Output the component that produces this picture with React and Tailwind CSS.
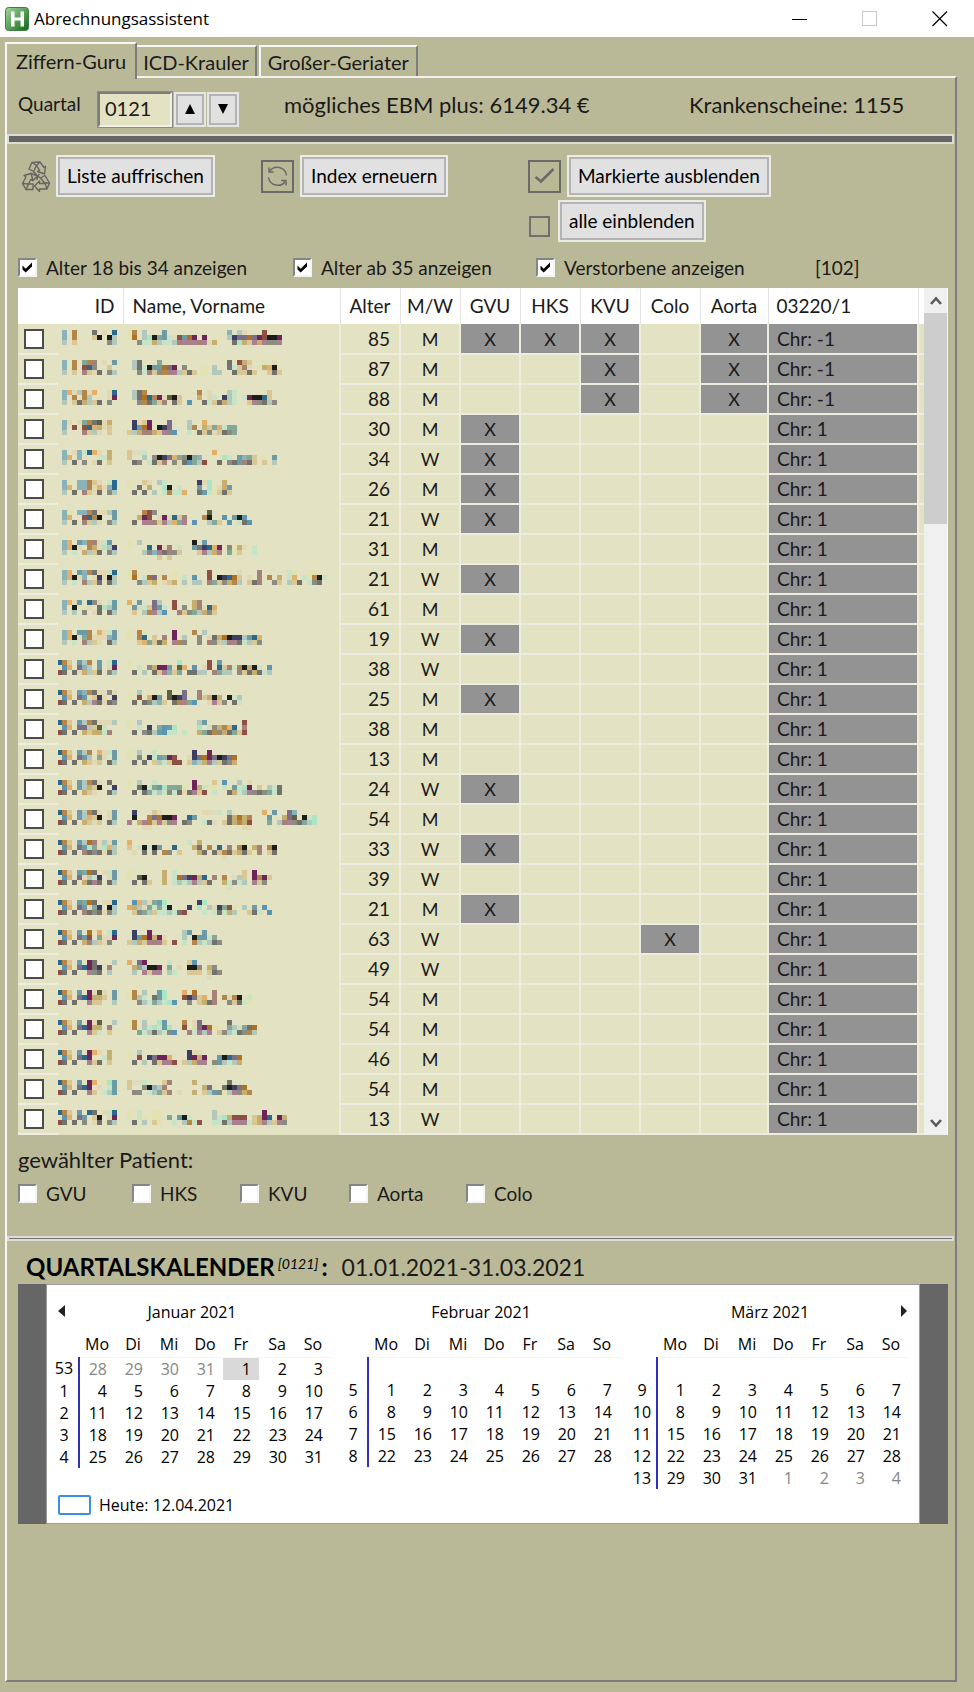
import React from "react";

const PALETTE = {
  a: "#8ab2ba", b: "#b3864a", c: "#e2d8b4", d: "#2a688e", e: "#1c1c1a", f: "#6e2458",
  g: "#72726a", h: "#b2c8bc", i: "#aae6c6", j: "#c8e4c6", k: "#c6ae70", l: "#e2b068",
  m: "#3c3e62", n: "#b07222", o: "#8e5044", p: "#7c6e88", q: "#6a9ba6", r: "#5a96b4",
  s: "#5c6240", t: "#a4827a", u: "#e2e4a6", v: "#dac796", w: "#a8808e", x: "#d8d8bc",
  y: "#84a898", z: "#8a8c82",
};

const X1 = "GVU";
const PATIENTS = [
  { age: 85, sex: "M", x: ["GVU", "HKS", "KVU", "Aorta"], chr: -1, id: [".a.b...g.c.d", ".a.b...ve.eh", ".h.v......zh"], name: ["ub.h...q............a.hc...o..", "un.hieyqjxoqnf.f....hmppnpfoeef", "..zjjkhjjhtwwwtwck...gikvwkwzzw"] },
  { age: 87, sex: "M", x: ["KVU", "Aorta"], chr: -1, id: [".a.b.ybt.c.q", ".a.b.odz..v.", ".h.v.tvcg.zh"], name: [".hg...y.............g.okv..u.c.", ".hgjeqqnpf.z...u.h..pjvtc.ukleu", "..zjtvzbtwhvgv.u.hh..gvvgv..vgv"] },
  { age: 88, sex: "M", x: ["KVU", "Aorta"], chr: -1, id: [".alchbcl..cd", ".a.b.bh...cf", ".h.vgkhvg.z."], name: [".hgb..........b.c...hj......v", ".hgndbfcsev...k.cj.mhj.jfeedv", "..zbgyvt.gv.r..gjvgkhj..vwzghz"] },
  { age: 30, sex: "M", x: [X1], chr: 1, id: [".ac.cybgsck.", ".a.o.odlkcv.", ".h...tvhc.v."], name: [".mcvf...p...h..l......", ".mqnf.emp...hb.kvyljyy", "vhkttkvwzr..j.gvzcvgzy"] },
  { age: 34, sex: "W", x: [X1], chr: 1, id: [".a.cajdlc.k.", ".al.a...jjk.", ".h.g.z.cg.v."], name: ["vxxj.............l............", "v..h.zemplyzeya....ij.qayv.u.q", ".gz.jgvt.zcgryho..g.zgqtgv.v.h", "..........x"] },
  { age: 26, sex: "M", x: [X1], chr: 1, id: [".au.aabvc.jd", ".al.aabclcad", ".h.g.tvcg.zh"], name: ["u..vc.hj......mci..k", "u.g.k..ie.j...q.i.ckq", ".g.g.h.jbjjl..gqjuvgv"] },
  { age: 21, sex: "W", x: [X1], chr: 1, id: [".au.aabgcchq", ".al..odbe..q", ".h.g.tvhc.zh"], name: ["...boz..........s....", "..kfo.cfcdvt...be..r.qer", ".g.wwtvwhlyw.r..hyv.r.jgr"] },
  { age: 31, sex: "M", x: [], chr: 1, id: [".al.qabtcjq.", ".alec.bkcihm", ".h.j.khvg.zh"], name: ["u.h..........e.q.........", "u...d.fct.j..qpmdlf.zukc.j", "...hzawgtzv...vwhkw.yuv..j", "......v.v"] },
  { age: 21, sex: "W", x: [X1], chr: 1, id: [".al.qabgccjd", ".aleca.cmceh", ".h.j.thvg.gh"], name: ["ub.......u......o.....c...t.....ju..uu..", "un.jnpub.u.j.r..o.emdnv.c.t.b.k.jl.jubej", "..zhvkucvk.h.hh.tyvzkbh.vgt..zv.hvg.jzg"] },
  { age: 61, sex: "M", x: [], chr: 1, id: [".alcq.dzc.jq", ".a.e.uc.gihq", ".h.h.z.cg.gh"], name: ["l.q..ph..o...kt", ".qcjvpqj.o.z.ktcdl", ".v.hbwhr..tvzyhkzv"] },
  { age: 19, sex: "W", x: [X1], chr: 1, id: [".al.qqb.lcjq", ".alexybcccaq", ".h.j.thvc.gh"], name: ["u.b......f...b.h......", "u.bd.v.t.f.h..z.cgknemmhqdl", "..vlyvgk.wbz..z.tzvhtwgjhvz"] },
  { age: 38, sex: "W", x: [], chr: 1, id: ["dbv.qhb.q.jd", ".rl.pah.q.cf", "og.gckhvg.zh"], name: ["u.........i.....o.q........", "u.j.zkffqcsl.r.co.dvtjbekej.r", ".g.h.gvwavy.gghh.tyhh.zvgkgjh"] },
  { age: 25, sex: "M", x: [X1], chr: 1, id: ["dbv.qabgcxzc", ".rl.pqcvmc.m", "og.g.khwgcgz"], name: ["u.h.....s..p..t........", "u.o.leq.semp..tvkek.ejh", ".g.gzhav.gbwyr..cwvz.gj"] },
  { age: 38, sex: "M", x: [], chr: 1, id: ["dbv.qhbgccch", ".rl.pphvsj..", "og.g.kvkkjt."], name: ["u.h...........hq.......o", "u.j.m.yrqi....i.czkbld.t", ".g.zghqrjj.j..kygbzkgyvo"] },
  { age: 13, sex: "M", x: [], chr: 1, id: ["dbv.qhb.lcjq", ".rl.pqh.yc.q", "og.g.kvcv.gh"], name: ["u.h..j.......m..f..", "u.z.mjqyfo..cmpnfpempn", ".g.g.vhjvoo.vahkwhvgzk"] },
  { age: 24, sex: "W", x: [X1], chr: 1, id: ["dbv.qhbgc.g.", ".rl.qhkve..m", "og.g.kvc..gh"], name: ["u.h..j.......f...v.r..h.c.", "u.gejyqiyyyu.fkjuu.juqjif.v.hjg", ".g.gyjhjzjgcgwvo.j..gkjhwzgzyjg"] },
  { age: 54, sex: "M", x: [], chr: 1, id: ["dbv.qhbgc.cq", ".rl.qhlve.cq", "og.g.kvcv.gh"], name: [".m...vc........ccxj.h......l.q..pa", ".e..bpneef..dq......gknkb...q..kps.eji", "w.kwbvwvzw.gz..jgx.vgkbko...y.htwzgyhi", "...cc..................cc"] },
  { age: 33, sex: "W", x: [X1], chr: 1, id: ["dbv.qhntchcq", ".rl.pqiycilh", "og.g.tgzgcgh"], name: ["l...........j.k........u..", "v.jejeq.ud...kg.b.d.t.beukt.be", ".c.g.g.bz.v...kg.gvbgvkgvut.vg", "...................x"] },
  { age: 39, sex: "W", x: [], chr: 1, id: ["dbv.qyng.cjq", ".rl.pchjm.cq", "og.g.kgwg.gh"], name: ["u......k.j.............v.f..", "u.se...k.jnpmfkd.t.b.xhv.fbfv", ".g.gv..k.jhjhwhvg..kjzjh.wvz", "....................x"] },
  { age: 21, sex: "M", x: [X1], chr: 1, id: ["dbv.qyng.ccd", ".rl.pqcym.eh", "og.g.tgzgczh"], name: [".rlhcyqi......mi", "lkhcyjyje...m.i.hcmyou.h.q.r", ".vzyhvjjhjgo...j.jgjkhu.vgj.r"] },
  { age: 63, sex: "W", x: ["Colo"], chr: 1, id: ["dbv.q.n.l.jd", ".rl.pqo.yccf", "og.g.kthvcz."], name: [".m..f......hq..q", ".mqnfkfc...h.eqqjy", "vhkvwtwv.o.j.bhjhgz"] },
  { age: 49, sex: "W", x: [], chr: 1, id: ["dbv.q.fg...h", ".rl.pdfgm.t.", "og.g..wzg.h."], name: ["l.pf....j...vr....", ".kyheef.y.c.eet.kz", ".h.wvww.hj..vvv.vgz", "................x"] },
  { age: 54, sex: "M", x: [], chr: 1, id: ["dbv.q.fcsc.q", ".rl.pdfkkv.q", "og.g..wvv..h"], name: ["ub.h..qi...l.n...t", "ubhj.gqi...ompvl.t.bcbeuj", "..zhjyhjir..z.vkgt..zvgju"] },
  { age: 54, sex: "M", x: [], chr: 1, id: ["dbv.q.fcs..h", ".rl.pdfkk.t.", "og.g..wvj.v."], name: ["ub.h..iq...b.cp.....g.", "ub.hjijqi..o.cpfnuu.yhjygn", "..yjhghjzr..tjwhw.vzhjgzbh"] },
  { age: 46, sex: "M", x: [], chr: 1, id: ["dbv.q.flc.k.", ".rl.pdf..jk.", "og.g..wvg.v."], name: ["u.h.........mcc", "u.o.mpffl...mfkf..qedpn", ".g.h.gvwwo.vhkww.zqhjhk", ".................x"] },
  { age: 54, sex: "M", x: [], chr: 1, id: ["dbv.q.fl.uiq", ".rl.pdf.c.jq", "og.g..wv.jhq"], name: ["vxxj...vt....k......g.", "v..zeaht.......kpu.gempn", ".zz.jhyvt.c..k.vhqzuhwzkb"] },
  { age: 13, sex: "W", x: [], chr: 1, id: ["dbv.q.dg.cjd", ".rl.pq.ve.cf", "og.g.z.cg.zh"], name: ["u.j..uu..........h.........f", "u.ju.uu.y.qej....hjikooo.vkfd.fk", ".g.h.vu..j.hbjo..jjghwwwjvkwhvwz"] },
];

const COLUMNS = ["GVU", "HKS", "KVU", "Colo", "Aorta"];

function Mosaic({ rows, cols }) {
  return (
    <svg width={cols * 5} height="20" viewBox={`0 0 ${cols * 5} 20`} shapeRendering="crispEdges" aria-hidden="true" className="block">
      {rows.flatMap((row, y) =>
        [...row].map((c, x) =>
          PALETTE[c] ? (
            <rect key={`${x}-${y}`} x={x * 5} y={y * 5} width="5" height="5" fill={PALETTE[c]} opacity={c === "u" || c === "x" ? 0.6 : 1} />
          ) : null
        )
      )}
    </svg>
  );
}

function Check({ label, checked }) {
  return (
    <label className="flex items-center gap-[9px] whitespace-nowrap">
      <span className="grid">
        <input
          type="checkbox"
          defaultChecked={checked}
          className="peer col-start-1 row-start-1 size-[19px] appearance-none border-2 border-t-[#858585] border-l-[#858585] border-r-[#f4f4f4] border-b-[#f4f4f4] bg-white"
        />
        <svg viewBox="0 0 19 19" className="pointer-events-none col-start-1 row-start-1 hidden size-[19px] peer-checked:block">
          <path d="M4.5 7.5 L7.7 10.8 L14 4.5 V8.6 L7.7 14.6 L4.5 11.5 Z" fill="#000" />
        </svg>
      </span>
      <span className="pt-[3px]">{label}</span>
    </label>
  );
}

function PushButton({ children }) {
  return (
    <button type="button" className="border-2 border-[#ebebe6] bg-[#b4b4b4] p-[2px] text-black">
      <span className="block bg-[#e1e1e1] px-[7px] py-[5px] leading-[24px] whitespace-nowrap">{children}</span>
    </button>
  );
}

function SpinButton({ label, children }) {
  return (
    <button type="button" aria-label={label} className="h-[35px] w-[32px] border-2 border-[#e6e6e2] bg-[#b4b4b4] p-[2px]">
      <span className="flex size-full items-center justify-center bg-[#e1e1e1]">
        <svg width="12" height="12" viewBox="0 0 12 12" className="fill-black">{children}</svg>
      </span>
    </button>
  );
}

function Rule({ thick }) {
  return <div className={thick ? "mr-px h-[10px] border-2 border-[#dcdcd0] bg-[#656565]" : "mr-px h-[5px] border-2 border-[#dcdcd6] bg-[#777]"} />;
}

const MONTHS = [
  { name: "Januar 2021", weeks: [[53, -28, -29, -30, -31, 1, 2, 3], [1, 4, 5, 6, 7, 8, 9, 10], [2, 11, 12, 13, 14, 15, 16, 17], [3, 18, 19, 20, 21, 22, 23, 24], [4, 25, 26, 27, 28, 29, 30, 31]] },
  { name: "Februar 2021", weeks: [[0, 0, 0, 0, 0, 0, 0, 0], [5, 1, 2, 3, 4, 5, 6, 7], [6, 8, 9, 10, 11, 12, 13, 14], [7, 15, 16, 17, 18, 19, 20, 21], [8, 22, 23, 24, 25, 26, 27, 28]] },
  { name: "März 2021", weeks: [[0, 0, 0, 0, 0, 0, 0, 0], [9, 1, 2, 3, 4, 5, 6, 7], [10, 8, 9, 10, 11, 12, 13, 14], [11, 15, 16, 17, 18, 19, 20, 21], [12, 22, 23, 24, 25, 26, 27, 28], [13, 29, 30, 31, -1, -2, -3, -4]] },
];

function Month({ month, first }) {
  return (
    <table className="w-[278px] table-fixed self-start border-collapse">
      <caption className="h-[36px] pt-[5px] text-center leading-[24px]">{month.name}</caption>
      <thead>
        <tr className="h-[26px] leading-[24px]">
          <th className="w-[26px] p-0" />
          {["Mo", "Di", "Mi", "Do", "Fr", "Sa", "So"].map((d) => (
            <th key={d} scope="col" className="border-b border-[#f4f4f4] p-0 text-center font-normal">{d}</th>
          ))}
        </tr>
      </thead>
      <tbody>
        {month.weeks.map((week, i) => (
          <tr key={i} className="h-[22px] leading-[22px]">
            {week.map((d, j) =>
              j === 0 ? (
                <th key={j} scope="row" className="border-r-2 border-[#3230b8] p-0 pr-[3px] text-center font-normal">{d || ""}</th>
              ) : (
                <td key={j} className={d < 0 ? "p-0 pr-[8px] text-right text-[#858585]" : first && i === 0 && d === 1 ? "bg-[#d9d9d9] p-0 pr-[8px] text-right" : "p-0 pr-[8px] text-right"}>
                  {d ? Math.abs(d) : ""}
                </td>
              )
            )}
          </tr>
        ))}
      </tbody>
    </table>
  );
}

export default function App() {
  return (
    <div className="flex min-h-screen flex-col bg-[#bab997] font-['Lato','Liberation_Sans',sans-serif] text-[19px] text-[#1a1a1a]">
      <header className="flex h-[37px] items-center justify-between bg-white pr-[26px] pl-[5px] font-['Open_Sans',sans-serif] text-[17px] text-black">
        <div className="flex items-center gap-[5px]">
          <svg width="24" height="24" viewBox="0 0 24 24" aria-hidden="true">
            <defs>
              <linearGradient id="logo" x1="0" y1="0" x2="1" y2="1">
                <stop offset="0" stopColor="#a4d49c" />
                <stop offset="0.5" stopColor="#5aa25a" />
                <stop offset="1" stopColor="#0c6414" />
              </linearGradient>
            </defs>
            <rect x="0.5" y="0.5" width="23" height="23" rx="3" fill="url(#logo)" stroke="#3f7f45" />
            <path d="M6 4.5h3.5v6h6v-6H19v15h-3.5v-6h-6v6H6z" fill="#fff" />
          </svg>
          <h1>Abrechnungsassistent</h1>
        </div>
        <div className="flex items-center gap-[54px]">
          <button type="button" aria-label="Minimieren"><svg width="16" height="16" viewBox="0 0 16 16"><path d="M0 8.5h15" stroke="#000" /></svg></button>
          <button type="button" aria-label="Maximieren" disabled><svg width="16" height="16" viewBox="0 0 16 16"><rect x="0.5" y="0.5" width="14" height="14" fill="none" stroke="#c8c8c8" /></svg></button>
          <button type="button" aria-label="Schließen"><svg width="16" height="16" viewBox="0 0 16 16"><path d="M0.5 0.5l14.5 14.5M15 0.5L0.5 15" stroke="#000" strokeWidth="1.2" /></svg></button>
        </div>
      </header>

      <main className="flex flex-1 flex-col pt-[5px] pr-[17px] pb-[10px] pl-[5px]">
        <nav role="tablist" className="flex items-end">
          <button role="tab" aria-selected="true" type="button" className="relative z-10 -mb-[3px] h-[37px] border-t-2 border-r-2 border-l-2 border-t-[#f6f6f4] border-r-[#7c7c7c] border-l-[#f6f6f4] bg-[#bab997] pr-[9px] pb-[2px] pl-[9px] text-[20px]">Ziffern-Guru</button>
          <button role="tab" aria-selected="false" type="button" className="h-[31px] border-t-2 border-r-2 border-t-[#f6f6f4] border-r-[#7c7c7c] px-[6px] text-[20px]">ICD-Krauler</button>
          <button role="tab" aria-selected="false" type="button" className="ml-[2px] h-[31px] border-t-2 border-r-2 border-l-2 border-t-[#f6f6f4] border-r-[#7c7c7c] border-l-[#f6f6f4] px-[7px] text-[20px]">Großer-Geriater</button>
        </nav>

        <section className="flex flex-1 flex-col border-2 border-t-[#f2f2f0] border-r-[#7c7c7c] border-b-[#7c7c7c] border-l-[#f6f6f4]">
          <div className="flex h-[56px] items-center pt-px pl-[11px]">
            <label htmlFor="quartal" className="w-[80px] pb-[5px]">Quartal</label>
            <input id="quartal" defaultValue="0121" className="mt-[5px] h-[35px] w-[74px] border-2 border-t-[#7c7c7c] border-r-[#f0f0e8] border-b-[#f0f0e8] border-l-[#7c7c7c] bg-[#e3e2c2] pb-[2px] pl-[5px] text-[20px] outline-1 outline-[#8c8c84]" />
            <div className="mt-[5px] ml-[2px] flex gap-px">
              <SpinButton label="Quartal vor"><path d="M6 1l5 10H1z" /></SpinButton>
              <SpinButton label="Quartal zurück"><path d="M6 11L1 1h10z" /></SpinButton>
            </div>
            <p className="ml-[45px] w-[405px] pb-[5px] text-[22px]">mögliches EBM plus: 6149.34 €</p>
            <p className="pb-[5px] text-[22px]">Krankenscheine: 1155</p>
          </div>
          <Rule thick />

          <div className="grid grid-cols-[239px_268px_1fr] pt-[11px] pl-[14px]">
            <div className="flex items-start gap-[5px]">
              <svg width="30" height="32" viewBox="0 0 30 32" fill="none" stroke="#646464" strokeWidth="1.4" strokeLinejoin="round" className="mt-[5px]" aria-hidden="true">
                <path d="M8 9 L11 2.5 L19 2 L23 7.5 L24.5 6.5 L23.5 14 L16.5 11.5 L18.5 10.3 L15.5 5.5 L12.5 11.5 Z" />
                <path d="M11 2.5 L15.5 5.5 M19 2 L15.5 5.5" />
                <path d="M24 15.5 L28.5 23 L26 29 L18.5 29 V31.5 L13.5 26 L18.5 21 V23.5 H24 L19.5 18 Z" />
                <path d="M28.5 23 H24 L26 29" />
                <path d="M12 29.5 H5 L1.5 23.5 L5 17 L3 15.5 L10 13.5 L12 20.5 L9.7 19.5 L7.5 24 H12 Z" />
                <path d="M1.5 23.5 L7.5 24 L5 29.5 M12.5 11.5 L16.5 16 L19.5 18 M10 13.5 L16.5 16 L16 20 M12 20.5 L18.5 14" />
              </svg>
              <PushButton>Liste auffrischen</PushButton>
            </div>
            <div className="flex items-start gap-[6px]">
              <svg width="33" height="33" viewBox="0 0 33 33" fill="none" stroke="#6a6a6a" strokeWidth="1.5" className="mt-[5px] ml-px" aria-hidden="true">
                <rect x="1" y="1" width="31" height="31" strokeWidth="2" />
                <path d="M8.5 11.5 A9.3 9.3 0 0 1 25.5 15.5 M24.5 21 A9.3 9.3 0 0 1 7.5 17.5" />
                <path d="M8 7.5 V12 H12.5 M25 25.5 V20.5 H20" />
              </svg>
              <PushButton>Index erneuern</PushButton>
            </div>
            <div className="flex flex-col items-start gap-[3px]">
              <div className="flex items-start gap-[6px]">
                <svg width="33" height="33" viewBox="0 0 33 33" fill="none" stroke="#6a6a6a" className="mt-[5px]" aria-hidden="true">
                  <rect x="1" y="1" width="31" height="31" strokeWidth="2" />
                  <path d="M7.5 17 L13 21.5 L25.5 9" strokeWidth="2.6" />
                </svg>
                <PushButton>Markierte ausblenden</PushButton>
              </div>
              <div className="flex items-start gap-[7px]">
                <svg width="23" height="23" viewBox="0 0 23 23" fill="none" stroke="#707070" strokeWidth="2" className="mt-[15px]" aria-hidden="true">
                  <rect x="2" y="2" width="19" height="19" />
                </svg>
                <PushButton>alle einblenden</PushButton>
              </div>
            </div>
          </div>

          <div className="grid h-[46px] grid-cols-[275px_243px_251px_1fr] items-center pt-[4px] pl-[11px]">
            <Check label="Alter 18 bis 34 anzeigen" checked />
            <Check label="Alter ab 35 anzeigen" checked />
            <Check label="Verstorbene anzeigen" checked />
            <span className="pt-[3px] pl-[28px]">[102]</span>
          </div>

          <div className="mr-[7px] ml-[11px] flex bg-[#e3e2c2]">
            <table className="min-w-0 flex-1 table-fixed border-collapse">
              <colgroup>
                <col className="w-[40px]" /><col className="w-[65px]" /><col />
                <col className="w-[60px]" /><col className="w-[60px]" /><col className="w-[60px]" /><col className="w-[60px]" /><col className="w-[60px]" /><col className="w-[60px]" />
                <col className="w-[68px]" /><col className="w-[150px]" /><col className="w-[6px]" />
              </colgroup>
              <thead>
                <tr className="h-[36px] bg-white [&>th]:border-r [&>th]:border-[#e4e4e4] [&>th]:p-0 [&>th]:font-normal">
                  <th colSpan="2" scope="col" className="text-right"><span className="pr-[8px]">ID</span></th>
                  <th scope="col" className="text-left"><span className="pl-[9px]">Name, Vorname</span></th>
                  <th scope="col" className="text-right"><span className="pr-[9px]">Alter</span></th>
                  <th scope="col">M/W</th>
                  {COLUMNS.map((c) => <th key={c} scope="col">{c}</th>)}
                  <th scope="col" className="text-left"><span className="pl-[8px]">03220/1</span></th>
                  <td />
                </tr>
              </thead>
              <tbody>
                {PATIENTS.map((p, i) => (
                  <tr key={i} className="h-[30px] leading-[26px] [&>td]:border-[#ececdf] [&>td]:p-0">
                    <td className="border-b-2">
                      <input type="checkbox" aria-label={`Patient ${i + 1} markieren`} className="ml-[6px] block size-[20px] appearance-none border-2 border-[#4c4c4c] bg-white" />
                    </td>
                    <td className="overflow-hidden align-top"><div className="-ml-px pt-[6px]"><Mosaic rows={p.id} cols={12} /></div></td>
                    <td className="overflow-hidden border-r-2 align-top"><div className="pt-[6px] pl-[4px]"><Mosaic rows={p.name} cols={40} /></div></td>
                    <td className="border-r-2 border-b-2 text-right"><span className="pr-[9px]">{p.age}</span></td>
                    <td className="border-r-2 border-b-2 text-center text-[18px]">{p.sex}</td>
                    {COLUMNS.map((c) => (
                      <td key={c} className={p.x.includes(c) ? "border-r-2 border-b-2 bg-[#939393] text-center text-[18px]" : "border-r-2 border-b-2"}>{p.x.includes(c) ? "X" : ""}</td>
                    ))}
                    <td className="border-r-2 border-b-2 bg-[#939393]"><span className="pl-[8px]">Chr: {p.chr}</span></td>
                    <td className="border-b-2" />
                  </tr>
                ))}
              </tbody>
            </table>
            <div className="flex w-[24px] flex-col border-r border-[#f8f8f8] bg-[#f0f0f0]">
              <button type="button" aria-label="Nach oben" className="flex h-[25px] items-center justify-center">
                <svg width="12" height="10" viewBox="0 0 12 10"><path d="M1 8l5-5.5L11 8" fill="none" stroke="#5c5c5c" strokeWidth="2.6" /></svg>
              </button>
              <div className="h-[211px] bg-[#cdcdcd]" />
              <button type="button" aria-label="Nach unten" className="mt-auto flex h-[25px] items-center justify-center">
                <svg width="12" height="10" viewBox="0 0 12 10"><path d="M1 2l5 5.5L11 2" fill="none" stroke="#5c5c5c" strokeWidth="2.6" /></svg>
              </button>
            </div>
          </div>

          <div role="group" aria-labelledby="patient" className="pt-[9px] pl-[11px]">
            <p id="patient" className="text-[22px] leading-[32px]">gewählter Patient:</p>
            <div className="grid h-[34px] grid-cols-[114px_108px_109px_117px_1fr] items-center">
              <Check label="GVU" />
              <Check label="HKS" />
              <Check label="KVU" />
              <Check label="Aorta" />
              <Check label="Colo" />
            </div>
          </div>

          <div className="mt-[26px]"><Rule /></div>

          <div className="flex h-[43px] items-center pt-[9px] pl-[19px] text-[24px]">
            <h2 className="font-bold text-black">QUARTALSKALENDER<sup className="px-[3px] text-[14px] font-normal italic">[0121]</sup>:</h2>
            <span className="ml-[14px] text-[23px]">01.01.2021-31.03.2021</span>
          </div>

          <div className="mr-[7px] ml-[11px] bg-[#666] px-[28px]">
            <div className="h-[240px] border border-[#9c9c9c] bg-white px-[6px] pt-[10px] font-['Open_Sans',sans-serif] text-[16px] text-black">
              <div className="relative flex h-[198px] gap-[11px]">
                <button type="button" aria-label="Vorheriger Monat" className="absolute top-[10px] left-[5px]"><svg width="8" height="12" viewBox="0 0 8 12"><path d="M7 0v12L0 6z" fill="#222" /></svg></button>
                {MONTHS.map((m, i) => <Month key={m.name} month={m} first={i === 0} />)}
                <button type="button" aria-label="Nächster Monat" className="absolute top-[10px] right-[5px]"><svg width="8" height="12" viewBox="0 0 8 12"><path d="M1 0v12l6-6z" fill="#222" /></svg></button>
              </div>
              <button type="button" className="ml-[5px] flex items-center gap-[8px]">
                <span className="h-[20px] w-[33px] rounded-[2px] border-2 border-[#3c8fe0]" />
                <span className="leading-[24px]">Heute: 12.04.2021</span>
              </button>
            </div>
          </div>
        </section>
      </main>
    </div>
  );
}
